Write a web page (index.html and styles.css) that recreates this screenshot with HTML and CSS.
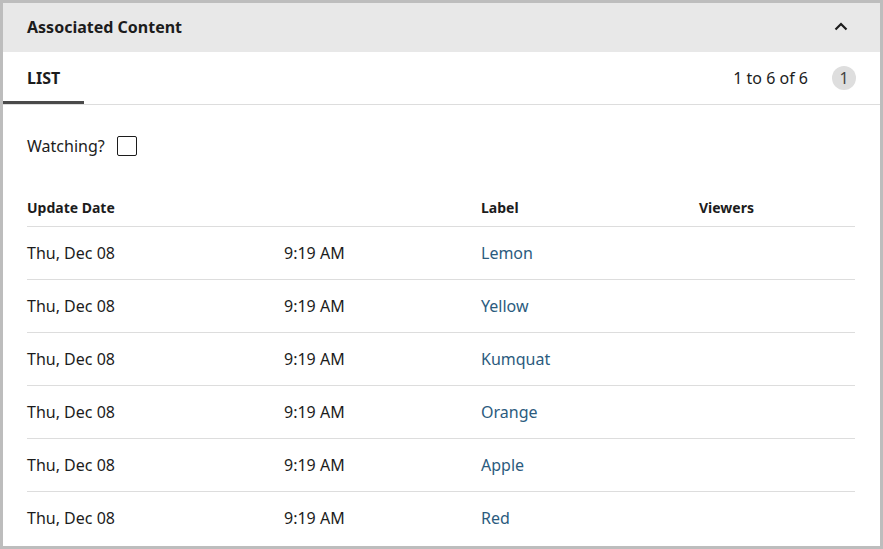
FILE: index.html
```html
<!DOCTYPE html>
<html lang="en">
<head>
<meta charset="utf-8">
<title>Associated Content</title>
<link rel="stylesheet" href="styles.css">
</head>
<body>
<section class="panel">
  <header class="panel-head">
    <h2 class="panel-title">Associated Content</h2>
    <button class="collapse" aria-label="Collapse">
      <svg width="14" height="9" viewBox="0 0 14 9"><path d="M1.5 7.5 L7 2 L12.5 7.5" fill="none" stroke="#1c1c1c" stroke-width="2.2"/></svg>
    </button>
  </header>
  <nav class="tabs">
    <div class="tab active">LIST</div>
    <div class="pager">
      <span class="range">1 to 6 of 6</span>
      <span class="page-badge">1</span>
    </div>
  </nav>
  <div class="panel-body">
    <label class="watch">
      <span>Watching?</span>
      <span class="checkbox"></span>
    </label>
    <table class="grid">
      <colgroup>
        <col class="c-date"><col class="c-time"><col class="c-label"><col class="c-viewers">
      </colgroup>
      <thead>
        <tr><th>Update Date</th><th></th><th>Label</th><th>Viewers</th></tr>
      </thead>
      <tbody>
        <tr><td>Thu, Dec 08</td><td>9:19 AM</td><td><a href="#">Lemon</a></td><td></td></tr>
        <tr><td>Thu, Dec 08</td><td>9:19 AM</td><td><a href="#">Yellow</a></td><td></td></tr>
        <tr><td>Thu, Dec 08</td><td>9:19 AM</td><td><a href="#">Kumquat</a></td><td></td></tr>
        <tr><td>Thu, Dec 08</td><td>9:19 AM</td><td><a href="#">Orange</a></td><td></td></tr>
        <tr><td>Thu, Dec 08</td><td>9:19 AM</td><td><a href="#">Apple</a></td><td></td></tr>
        <tr><td>Thu, Dec 08</td><td>9:19 AM</td><td><a href="#">Red</a></td><td></td></tr>
      </tbody>
    </table>
  </div>
</section>
</body>
</html>
```

FILE: styles.css
```css
* { box-sizing: border-box; }
html, body { margin: 0; padding: 0; background: #fff; }
body { font-family: "Noto Sans", "Open Sans", sans-serif; color: #1c1c1c; }

.panel {
  width: 883px;
  height: 549px;
  border: 3px solid #bdbdbd;
  background: #fff;
  overflow: hidden;
}

.panel-head {
  height: 49px;
  background: #e8e8e8;
  display: flex;
  align-items: center;
  justify-content: space-between;
  padding: 0 24px;
}
.panel-title {
  margin: 0;
  font-size: 16px;
  font-weight: 700;
  color: #1c1c1c;
  margin-top: -2px;
}
.collapse {
  border: 0;
  background: transparent;
  padding: 0;
  width: 16px;
  height: 16px;
  display: flex;
  align-items: center;
  justify-content: center;
  margin-right: 7px;
  margin-top: -2px;
}

.tabs {
  height: 53px;
  border-bottom: 1px solid #dddddd;
  display: flex;
  align-items: stretch;
  justify-content: space-between;
  padding-right: 24px;
}
.tab {
  width: 81px;
  padding-left: 24px;
  display: flex;
  align-items: center;
  font-size: 16px;
  font-weight: 700;
  border-bottom: 3px solid #4a4a4a;
  padding-top: 2px;
}
.pager {
  display: flex;
  align-items: center;
  gap: 24px;
  font-size: 16px;
}
.page-badge {
  width: 24px;
  height: 24px;
  border-radius: 50%;
  background: #dedede;
  display: flex;
  align-items: center;
  justify-content: center;
  font-size: 16px;
  color: #444;
}

.panel-body { padding: 31px 24px 0; }

.watch {
  display: flex;
  align-items: center;
  gap: 12px;
  font-size: 16px;
  height: 20px;
}
.checkbox {
  width: 20px;
  height: 20px;
  border: 1px solid #1c1c1c;
  border-radius: 2px;
}

.grid {
  margin-top: 34px;
  width: 828px;
  border-collapse: collapse;
  table-layout: fixed;
}
.c-date { width: 257px; }
.c-time { width: 197px; }
.c-label { width: 218px; }
.c-viewers { width: 156px; }

.grid th {
  height: 36px;
  text-align: left;
  font-size: 14px;
  font-weight: 700;
  padding: 0;
  border-bottom: 1px solid #dddddd;
  vertical-align: middle;
}
.grid td {
  height: 53px;
  padding: 0;
  font-size: 16px;
  border-bottom: 1px solid #dddddd;
  vertical-align: middle;
}
.grid tbody tr:last-child td { border-bottom: 0; }
.grid a { color: #2b5b7e; text-decoration: none; }
```
